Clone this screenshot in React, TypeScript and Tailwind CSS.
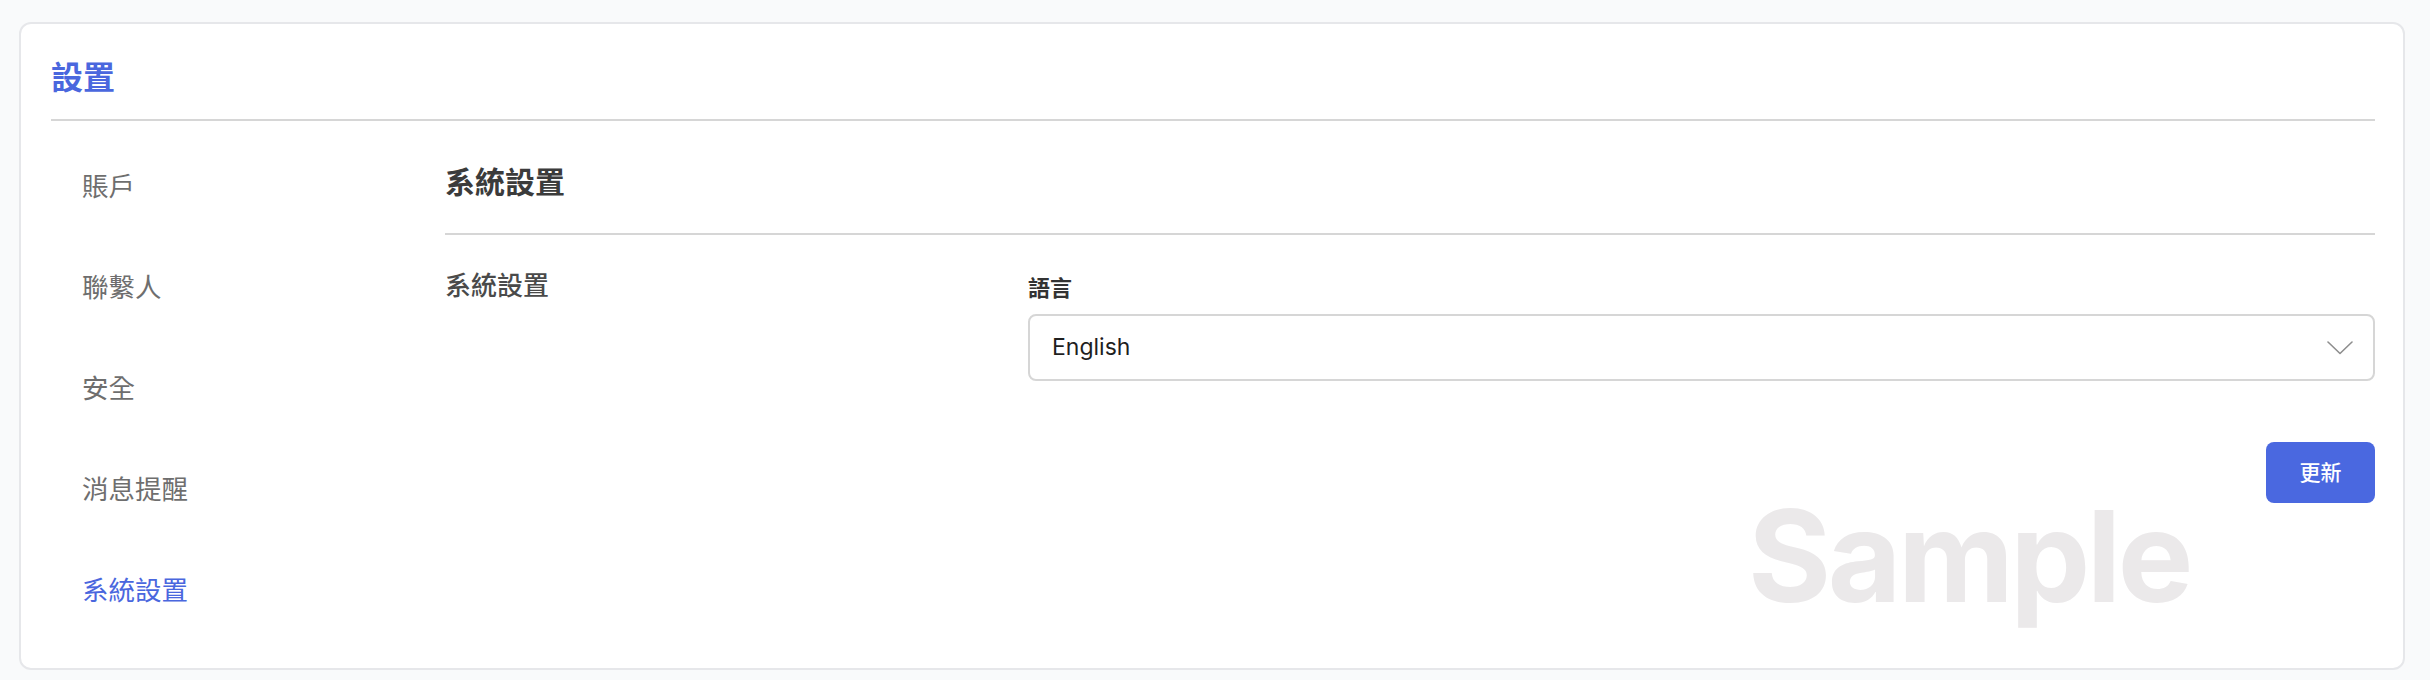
const font = "font-['Inter','Noto_Sans_CJK_TC',sans-serif]";

const menu = ['賬戶', '聯繫人', '安全', '消息提醒', '系統設置'];

export default function App() {
  const active = '系統設置';

  return (
    <div className={`min-h-[680px] bg-[#f9fafb] pl-[19px] pr-[25px] pt-[22px] pb-[10px] ${font}`}>
      <div className="relative h-[648px] overflow-hidden rounded-[12px] border-2 border-[#e6e7ea] bg-white pl-[30px] pr-[28px]">
        {/* watermark */}
        <div className="pointer-events-none absolute left-[1727px] top-[469px] select-none text-[127px] font-bold leading-none tracking-[-3.5px] text-[#ebe9ea]">
          Sample
        </div>

        {/* Header */}
        <div className="border-b-2 border-[#d6d6d6] pb-[17px] pt-[30px]">
          <h1 className="text-[32px] font-bold leading-[48px] text-[#4a67de]">設置</h1>
        </div>

        <div className="flex">
          {/* Sidebar */}
          <nav className="flex w-[394px] shrink-0 flex-col pt-[15px]">
            {menu.map(item => (
              <div key={item}
                className={`flex h-[101px] items-center pl-[31px] text-[26.5px] ${item === active ? 'text-[#4a67de]' : 'text-[#6e6e6e]'}`}>
                {item}
              </div>
            ))}
          </nav>

          {/* Content */}
          <div className="relative flex-1">
            <div className="border-b-2 border-[#d6d6d6] pb-[28px] pt-[39px]">
              <h2 className="text-[30px] font-bold leading-[45px] text-[#3b3b3b]">系統設置</h2>
            </div>

            <div className="flex pt-[31px]">
              <div className="w-[583px] shrink-0 text-[26px] font-medium leading-[39px] text-[#4a4a4a]">系統設置</div>

              <div className="flex flex-1 flex-col">
                <label className="mt-[6px] mb-[9px] text-[22px] font-semibold leading-[33px] text-[#333]">語言</label>
                <div className="flex h-[67px] items-center justify-between rounded-[8px] border-2 border-[#d6d6d6] bg-white pl-[22px] pr-[20px]">
                  <span className="text-[23px] text-[#1f1f1f]">English</span>
                  <svg width="26" height="14" viewBox="0 0 26 14" fill="none">
                    <polyline points="1,1 13,12.5 25,1" stroke="#8e8e8e" strokeWidth="1.6" strokeLinecap="round" strokeLinejoin="round" />
                  </svg>
                </div>

                <button className="mt-[61px] flex h-[61px] w-[109px] items-center justify-center self-end rounded-[8px] bg-[#4a68e0] text-[21px] font-medium text-white">
                  更新
                </button>
              </div>
            </div>
          </div>
        </div>
      </div>
    </div>
  );
}
